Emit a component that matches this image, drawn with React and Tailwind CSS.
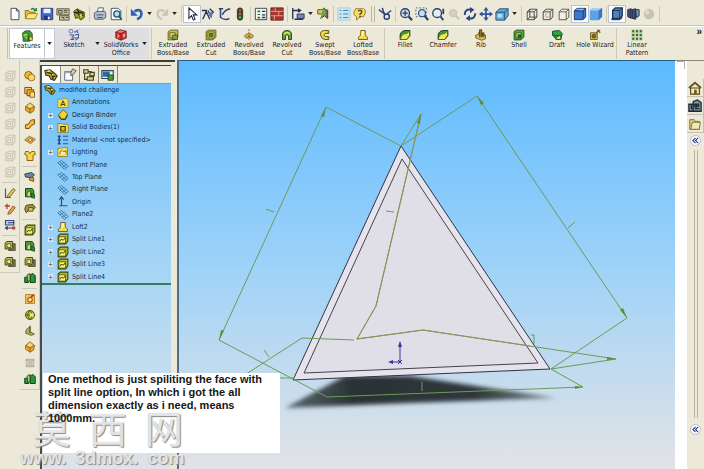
import { useState } from "react";

// small drawings, all on a 16 x 16 grid
const icons = {
    newDoc: <><path d="M3.5 1.5h6l3 3v10h-9z" fill="#fff" stroke="#333c50" /><path d="M9.500 1.500v3h3" fill="none" stroke="#333c50" /></>,
    open: <><path d="M1.500 13V4h4l1 2h6v7z" fill="#e8c43c" stroke="#8a6c10" /><path d="M1.500 13.500l3-6h11l-3 6z" fill="#ffe680" stroke="#a08018" /><path d="M8 3q3-3 5 1m-2 0h3V1" stroke="#1f7a36" fill="none" strokeWidth="1.500" /></>,
    save: <><path d="M1.500 1.500h13v13h-13z" fill="#3f6bd0" stroke="#1c2f78" /><path d="M4 2h8v5H4z" fill="#eef2ff" /><path d="M4.500 10h7v4.500h-7z" fill="#26367c" /><path d="M9 11h2v3H9z" fill="#fff" /></>,
    drawing: <><path d="M1 2h14v7H1zM4 10h11v5H4z" fill="#c9c2a8" stroke="#55503c" /><path d="M3 4h4v3H3zm6 0h4M9 6h4M6 12h3v2M11 12h3" stroke="#4a4632" fill="none" /></>,
    part: <><path d="M2 5l4-3 3 2 5 2v6l-4 3-3-3-3 1z" fill="#94a62c" stroke="#34350b" /><path d="M3 6l4 1 2 4 4-2M6 3l2 3 5 1" stroke="#1f2205" strokeWidth="1.500" fill="none" /><circle cx="10" cy="10" r="1.500" fill="#ece05c" /></>,
    print: <><path d="M5 6l1-5h6l-1 5" fill="#fff" stroke="#4a5774" /><path d="M1.500 7l3-2h9l1 2v5l-3 2h-9l-1-2z" fill="#b6c0d4" stroke="#44506c" /><path d="M4 9h8M5 12h6" stroke="#3c4663" /></>,
    preview: <><path d="M2.500 1.500h8l3 3v10h-11z" fill="#fff" stroke="#3a4663" /><circle cx="9" cy="8" r="3.500" fill="#b5e0ec" stroke="#24536e" strokeWidth="1.500" /><path d="M11.500 10.500l3 4" stroke="#24536e" strokeWidth="2" /></>,
    undo: <><path d="M5 5q8-4 8 3 0 4-5 6" fill="none" stroke="#2e62b4" strokeWidth="3" /><path d="M1 2v8h8z" fill="#2e62b4" /></>,
    redo: <><path d="M11 5Q3 1 3 8q0 4 5 6" fill="none" stroke="#c9c5b2" strokeWidth="2.500" /><path d="M15 2v8H7z" fill="#c9c5b2" /></>,
    select: <path d="M4.500 1v12l3-3 2 5 2-1-2-5h4z" fill="#fff" stroke="#1d2436" strokeWidth="1.200" />,
    grid: <><path d="M2 14l4-9 4 9M1 4h6M10 2l4 4-3 3M8 4l4 8" stroke="#24345c" strokeWidth="1.500" fill="none" /><path d="M9 6h4v4H9z" fill="#5f77b5" /></>,
    sketchLine: <path d="M2 2h5M4 2v10q6 4 10 1M6 9Q9 3 15 2" stroke="#34436c" strokeWidth="1.700" fill="none" />,
    light: <><rect x="5" y="1" width="6" height="14" rx="3" fill="#3a4234" stroke="#22281c" /><circle cx="8" cy="4" r="1.700" fill="#d8362e" /><circle cx="8" cy="8" r="1.600" fill="#8a7a30" /><circle cx="8" cy="12" r="1.700" fill="#3fb44a" /></>,
    options: <><path d="M1.500 1.500h13v13h-13z" fill="#f5f5ee" stroke="#2c3844" /><path d="M4 4h3v2H4zm0 4h3v1H4zm0 3h3v2H4z" fill="#297040" /><path d="M9 5h4M9 9h4M9 12h4" stroke="#2b3954" strokeWidth="1.500" /></>,
    table: <><path d="M1 1h14v14H1z" fill="#a8382f" stroke="#6a1d18" /><path d="M1 5h14M1 10h14M6 1v4M10 5v5M5 10v5" stroke="#e0a890" /></>,
    dimension: <><path d="M2 1v13M2 4h8M8 2l3 2-3 2M4 14h10" stroke="#26315a" strokeWidth="1.500" fill="none" /><path d="M7 8h8v5H7z" fill="#7788bb" stroke="#26315a" /></>,
    macro: <><path d="M2 3h8v5H2z" fill="#e6c94b" stroke="#5c4c10" /><path d="M8 1l5 3v9l-3-3-5 3" fill="#6ba354" stroke="#27401b" /><path d="M13 3v10" stroke="#96352e" strokeWidth="2" /></>,
    list: <><path d="M1 1h14v14H1z" fill="#c7e5f4" stroke="#a9cbe0" /><path d="M3 4h2m2 0h6M3 8h2m2 0h6M3 12h2m2 0h6" stroke="#4f8cb4" strokeWidth="1.300" /></>,
    help: <><path d="M3 2h9q3 1 2 5l-2 4H8l-4 4v-4q-4-2-3-5z" fill="#f5df62" stroke="#8b7423" /><path d="M6 5q2-3 4 0 0 2-2 3v1M8 10v2" stroke="#443d1e" strokeWidth="1.500" fill="none" /></>,
    viewSel: <><path d="M1 3l9 7M5 1l2 7M10 8l5-4M8 12l-1-6" stroke="#2f4378" strokeWidth="1.700" /><circle cx="10" cy="11" r="3" fill="#dae4f4" stroke="#243768" strokeWidth="1.500" /></>,
    zoomFit: <><circle cx="7" cy="7" r="5" fill="#cfdcee" stroke="#2b3d68" strokeWidth="1.500" /><path d="M11 11l4 4" stroke="#2b3d68" strokeWidth="2.500" /><path d="M4 7h6M7 4v6" stroke="#243862" strokeWidth="1.500" /></>,
    zoomArea: <><path d="M1 1h12v10H1z" stroke="#485684" strokeDasharray="2 2" fill="none" /><circle cx="8" cy="7" r="4" fill="#cfdcee" stroke="#2b5a8b" strokeWidth="1.500" /><path d="M11 10l4 5" stroke="#2b3d68" strokeWidth="2.500" /></>,
    zoomIn: <><circle cx="7" cy="7" r="5" fill="#e4ecf7" stroke="#2b3d68" strokeWidth="1.500" /><path d="M11 11l3 4M14 2v6" stroke="#2b3d68" strokeWidth="2" /></>,
    zoomOff: <><circle cx="7" cy="7" r="4" fill="#d5d1c0" stroke="#c9c5b4" strokeWidth="1.500" /><path d="M10 10l4 4" stroke="#c9c5b4" strokeWidth="2.500" /></>,
    rotate: <><path d="M2 9q0-7 7-6M14 7q0 7-7 6" fill="none" stroke="#2c4586" strokeWidth="2.200" /><path d="M8 0l5 3-5 4zM8 16l-5-3 5-4z" fill="#2c4586" /></>,
    pan: <><path d="M8 2v12M2 8h12" stroke="#31549c" strokeWidth="2" /><path d="M8 0l3 4H5zM8 16l3-4H5zM0 8l4-3v6zM16 8l-4-3v6z" fill="#31549c" /></>,
    stdViews: <><path d="M1 6l4-4h10v8l-4 5H1z" fill="#5fa9d6" stroke="#1f4f78" /><path d="M1 6h10v9M11 6l4-4" fill="none" stroke="#1f4f78" /><path d="M3 8h5v4H3z" fill="#b9e0f4" /></>,
    wire: <path d="M2.500 5.500h8v9h-8zM5.500 2.500h8v9h-8zM2.500 5.500l3-3M10.500 5.500l3-3M2.500 14.500l3-3M10.500 14.500l3-3" fill="none" stroke="#3c3f42" />,
    hidden: <><path d="M2.500 5.500h8v9h-8zM2.500 5.500l3-3h8v9l-3 3M10.500 5.500l3-3" fill="none" stroke="#3c3f42" /><path d="M5.500 3v8.500H13" stroke="#aaa898" fill="none" /></>,
    noHidden: <path d="M2.500 5.500h8v9h-8zM2.500 5.500l3-3h8v9l-3 3M10.500 5.500l3-3" fill="#f3f1e6" stroke="#4c4e50" />,
    shadedEdge: <><path d="M1.500 4.500l3-3h10v10l-3 3h-10z" fill="#3d78cd" stroke="#17305f" /><path d="M2 4.500h9.500V14M11.500 4.500l3-3" fill="none" stroke="#17305f" /><path d="M3 3l2-1h8l-2 2z" fill="#8dbcf2" /></>,
    shaded: <><path d="M1 4l3-3h11v10l-4 4H1z" fill="#5ba2e8" /><path d="M1 4l3-3h11l-4 3z" fill="#a4d0f7" /><path d="M11 4l4-3v10l-4 4z" fill="#3874bf" /></>,
    shadow: <><path d="M3 4l3-3h8v9l-3 3H3z" fill="#4d83c2" stroke="#1d2f4c" strokeWidth="1.500" /><path d="M3 4h8v8M11 4l3-3" fill="none" stroke="#1d2f4c" /><path d="M1 13h10l3-3v3l-3 2H2z" fill="#344154" /></>,
    section: <><path d="M2 3l4-1v11l-4-2zM7 3l4-1v12l-4-1z" fill="#3c4b73" stroke="#1a243c" /><path d="M11 3h4v7l-3 2z" fill="#8296bc" stroke="#1a243c" /></>,
    ball: <><circle cx="8" cy="8" r="6" fill="#c5c2b4" /><circle cx="6" cy="6" r="2.500" fill="#dedbcd" /></>,
    features: <><path d="M2 4l4-3h6l3 4v7l-3 3H3z" fill="#379d3d" stroke="#174a1a" /><path d="M2 6q5-4 8 0v8M5 8h4v6" fill="#b8da65" stroke="#174a1a" /><path d="M11 9h4v5h-4z" fill="#e1dc48" stroke="#55571a" /></>,
    sketch: <><circle cx="4" cy="3" r="2.500" fill="none" stroke="#5059a4" /><path d="M8 4h3l3-3M2 8h6l-3 4h9M9 8l5-1v5l-4 3M3 14h5M11 2l3 4" fill="none" stroke="#3f4893" strokeWidth="1.300" /></>,
    office: <><path d="M1 4l6-3 8 2v9l-7 3-7-3z" fill="#cf312d" stroke="#751612" /><path d="M1 4l7 2 7-3M8 6v9" stroke="#7c1713" fill="none" /><path d="M3 8q3 0 2 2t-2 1M11 7l1 4 1-5" stroke="#f7c8c4" strokeWidth="1.200" fill="none" /><path d="M2 4l5-2 6 1-5 2z" fill="#ef8580" /></>,
    extBoss: <><path d="M1.500 3.500l3-2h10v9l-4 4h-9z" fill="#c9c548" stroke="#454312" /><path d="M4 5h7v7H4z" fill="#f0ec86" stroke="#454312" /><path d="M7 8h7v6H7z" fill="#7ca637" stroke="#29410f" /></>,
    extCut: <><path d="M1.500 3.500l3-2h10v9l-4 4h-9z" fill="#b4bd35" stroke="#454312" /><path d="M4 4h8v8H4z" fill="#ece674" stroke="#454312" /><path d="M6 6h4v4H6z" fill="#5c8126" stroke="#29410f" /></>,
    revBoss: <><path d="M8 0v16" stroke="#6d5d28" strokeDasharray="3 1" /><path d="M2 9q6-6 12 0l-2 3H9V9H7v3H4z" fill="#dcb945" stroke="#6c4f14" /></>,
    revCut: <><path d="M2 14V8q0-6 6-6t6 6v6h-4V9q-2-3-4 0v5z" fill="#64a33e" stroke="#244a14" strokeWidth="1.300" /><path d="M4 7q4-5 8 0" stroke="#e7e75b" strokeWidth="2" fill="none" /></>,
    swept: <><path d="M13 2H7Q1 3 2 8t6 6h5v-4H8q-3-2 0-4h5z" fill="#edd94b" stroke="#635512" strokeWidth="1.300" /><path d="M12 3v3M12 10v4" stroke="#8b7a22" /></>,
    loft: <><path d="M5 2h6v4q0 3 3 5v3H2v-3q3-2 3-5z" fill="#f0d94c" stroke="#6f5810" strokeWidth="1.200" /><path d="M6 3h3v4l-3 4z" fill="#fff6ac" /></>,
    fillet: <><path d="M1.500 14V8q1-6 8-6h5v7l-4 5z" fill="#3c9741" stroke="#153f19" strokeWidth="1.300" /><path d="M2 13Q3 6 10 6l4-3v6l-4 5H2z" fill="#ede553" stroke="#5a5612" /></>,
    rib: <><path d="M1 8l4-1V4h3v3l6 1v5l-5 2-8-3z" fill="#d6c15a" stroke="#594818" /><path d="M6 11V1h3v10M10 10V5h2v6" fill="#8c7328" stroke="#4e3c12" /></>,
    shell: <><path d="M1.500 3.500l3-2h10v9l-4 4h-9z" fill="#53aa3e" stroke="#1d4b16" strokeWidth="1.200" /><path d="M4 5h7v7H4z" fill="#e8e15a" stroke="#1d4b16" /><path d="M6 7h5v5H6z" fill="#236229" /></>,
    draft: <><path d="M2 3l9-1 4 4-2 8H7L2 8z" fill="#2da34b" stroke="#12461f" strokeWidth="1.200" /><path d="M2 8l9 1 2 5" fill="none" stroke="#12461f" /><path d="M7 11l6-3v6H7z" fill="#e1e15d" stroke="#12461f" /></>,
    hole: <><path d="M2 5h9v9H2z" fill="#d2bd4a" stroke="#5b4a14" /><circle cx="6.500" cy="9.500" r="2.500" fill="#83702a" stroke="#44380f" /><path d="M9 7l5-6M11 1l4 4M10 4l5-2" stroke="#75621e" strokeWidth="1.500" /></>,
    pattern: <path d="M1 1h4v4H1zM6 1h4v4H6zM11 1h4v4h-4zM1 6h4v4H1zM6 6h4v4H6zM11 6h4v4h-4zM1 11h4v4H1zM6 11h4v4H6zM11 11h4v4h-4z" fill="#2f6f28" stroke="#e5e5c7" strokeWidth=".8" />,
    ghost: <path d="M2.500 4.500h9v10h-9zM2.500 4.500l3-3h9v10l-3 3M11.500 4.500l3-3M5 7h4v5H5z" fill="none" stroke="#b9b5a4" />,
    pencil: <><path d="M2 2v12h7" fill="none" stroke="#4a5098" strokeWidth="1.500" /><path d="M5 11l7-9 3 2-7 9-4 1z" fill="#e4c75c" stroke="#6b4b1e" /></>,
    redPencil: <><path d="M4 1v7M1 4h7" stroke="#c03a32" strokeWidth="1.700" /><path d="M6 12l6-8 3 2-6 8-4 1z" fill="#e2a94b" stroke="#7a3c1c" /></>,
    dims: <><path d="M2 2h11v6H2z" fill="#c9d6ea" stroke="#34487e" strokeWidth="1.500" /><path d="M5 5h9M3 12h10M5 10l-3 2 3 2" stroke="#283a77" strokeWidth="1.500" fill="none" /><path d="M11 10h4v4h-4z" fill="#b64238" /></>,
    goldBall: <><circle cx="6" cy="7" r="5" fill="#f0ba35" stroke="#86560d" strokeWidth="1.200" /><circle cx="10" cy="10" r="4.500" fill="#f8d969" stroke="#86560d" /></>,
    goldBlock: <><path d="M1 2h9v8H1z" fill="#f5d258" stroke="#77460b" strokeWidth="1.200" /><path d="M4 5h9v8H4z" fill="#f3aa30" stroke="#77460b" strokeWidth="1.200" /><path d="M8 8h6v7H8z" fill="#ffe07d" stroke="#77460b" /></>,
    gem: <><path d="M8 1l6 5-1 6-5 3-6-4V6z" fill="#e4a52e" stroke="#875b18" /><path d="M2 6l6 3 6-3M8 9v6" stroke="#7f5414" fill="none" /><path d="M4 6l4-4 4 4-4 2z" fill="#f9dd7d" /></>,
    bend: <path d="M2 9l4-1 3-5 5-1v6l-4 2-3 4H2z" fill="#f2b83b" stroke="#7d500d" strokeWidth="1.300" />,
    diamond: <><path d="M1 8l6-5 8 4-6 6z" fill="#e9b64a" stroke="#815417" /><path d="M5 8l3-2 4 2-4 2z" fill="#fff1a5" stroke="#815417" /></>,
    shirt: <path d="M2 2h4l2 3 2-3h4l1 4-3 1v7H4V7L1 6z" fill="#f6d748" stroke="#8c620f" strokeWidth="1.300" />,
    gray: <><path d="M3 3h10v10H3z" fill="#d2cfc0" stroke="#aaa797" /><path d="M2 4h12M2 12h12M5 5l6 6M11 5l-6 6" stroke="#aaa797" /></>,
    surface: <><path d="M1 4l9-2 4 3-4 4-8-1z" fill="#6689a5" stroke="#223c4f" strokeWidth="1.200" /><path d="M8 8l5 1v5l-6-2z" fill="#d49c37" stroke="#61400e" /></>,
    green: <><path d="M2 2h9l2 3v8H2z" fill="#4a9f3f" stroke="#174319" strokeWidth="1.300" /><path d="M4 9q1-4 5-4v8H4z" fill="#cce06d" stroke="#174319" /><path d="M9 8l5 2v5l-4-1z" fill="#2b883a" stroke="#174319" /></>,
    olive: <><path d="M1 8l2-5 9-1 3 4-3 3-6 1-3 3z" fill="#a59a43" stroke="#434116" strokeWidth="1.300" /><path d="M6 6h6v5H6z" fill="#d5c45e" stroke="#434116" /></>,
    split: <><path d="M1.500 4l3-2.500h10v9l-3 4h-10z" fill="#b6c22c" stroke="#3d4409" strokeWidth="1.400" /><path d="M2.500 5h9v8.500h-9z" fill="#f5f07b" stroke="#3d4409" /><path d="M4 11q1-4 3-2t4-3" fill="none" stroke="#3d4409" strokeWidth="1.300" /></>,
    offset: <><path d="M1.500 4l2-2h8v8l-2 2h-8z" fill="#bdb94e" stroke="#4b4a18" strokeWidth="1.300" /><path d="M4 5h5v5H4z" fill="#eeeba0" stroke="#4b4a18" /><path d="M12 5h3v9H6v-2h6z" fill="#7b7a54" stroke="#45442a" /></>,
    mold: <><path d="M1 7h5v7H1zM8 4l4-2 3 3v9H8z" fill="#2b9341" stroke="#153e1c" strokeWidth="1.300" /><path d="M4 4l4-2v9l-3 2z" fill="#a9d058" stroke="#153e1c" /></>,
    orange: <><path d="M2 2h12v12H2z" fill="#f5c04d" stroke="#a9731a" /><circle cx="8" cy="9" r="3" fill="#ffecae" stroke="#ac4b19" strokeWidth="1.500" /><path d="M9 5l4-2" stroke="#a43c17" strokeWidth="2" /></>,
    globe: <><circle cx="8" cy="8" r="6" fill="#adc034" stroke="#475219" strokeWidth="1.300" /><path d="M2 8h12M8 2q-6 6 0 12M8 2q6 6 0 12" stroke="#475219" fill="none" /><path d="M8 6h5v4H8z" fill="#efe870" /></>,
    axis: <><path d="M3 6l5-4v7l6 3-4 2-8-3z" fill="#b1ac65" stroke="#55522a" /><path d="M8 1v10" stroke="#55522a" strokeWidth="1.500" /></>,
    tree: <><path d="M1 3l6-1 5 4 3 3-3 5-4-1-2-4-4-1z" fill="#b9a93a" stroke="#373c0b" strokeWidth="1.300" /><path d="M3 5l5 1 2 4 3-1M8 6l3 1M10 10v3" stroke="#2c2f08" fill="none" strokeWidth="1.500" /><path d="M4 4l3-1M9 8l2-1" stroke="#fbf59a" strokeWidth="1.500" /></>,
    property: <><path d="M2 4h9v10H2z" fill="#fff" stroke="#505b72" /><path d="M2 4h9v2H2z" fill="#9eaac3" /><path d="M9 5l2-4 4 2-3 4-3 2z" fill="#ddd0a4" stroke="#4f4a3a" /></>,
    config: <><path d="M2 2h5v4H2zM9 5h5v4H9zM6 10h7v4H6z" fill="#d8cfa0" stroke="#47411a" strokeWidth="1.300" /><path d="M3 6v7h3M7 4h4" stroke="#47411a" fill="none" strokeWidth="1.300" /></>,
    display: <><path d="M1 3h13v9H1z" fill="#e8edf5" stroke="#354765" strokeWidth="1.300" /><path d="M2 10h8V4H2z" fill="#2c6c9d" /><path d="M8 8h6v6H8z" fill="#4b9a3e" stroke="#1f4519" /></>,
    annot: <><path d="M1 3h6l1-1h5l2 2v10H1z" fill="#f3dd54" stroke="#a28a24" /><path d="M5 12l3-7 3 7M6 10h4" stroke="#3c3c1e" strokeWidth="1.300" fill="none" /></>,
    binder: <><path d="M8 1l6 5-3 7H6L2 8z" fill="#f3d33b" stroke="#796214" strokeWidth="1.200" /><path d="M2 9l4 5h5l3-6" fill="none" stroke="#5a4a12" strokeWidth="1.500" /></>,
    bodies: <><path d="M1 2h6l1 1h7v11H1z" fill="#f4df55" stroke="#8c7620" /><path d="M5 6h6v6H5z" fill="#d7bc35" stroke="#3e3610" strokeWidth="1.500" /></>,
    material: <><path d="M3 2v12M1 3h4M1 8h4M1 13h4" stroke="#24478c" strokeWidth="2" /><path d="M8 3h7M8 8h7M8 13h7" stroke="#2858a0" strokeWidth="1.600" /></>,
    lighting: <><path d="M1 3h6l1-1h6v12H1z" fill="#f4df55" stroke="#8c7620" /><path d="M4 11V8l3-2 2 2 3-2v5" stroke="#96631e" fill="#fffbc9" strokeWidth="1.300" /></>,
    plane: <path d="M1 5l5-3 9 8-5 4zM4 4l8 8M4 8l6-4M7 11l6-4" fill="none" stroke="#35688f" />,
    origin: <path d="M6 2v11h8M3 5l3-4 3 4M3 13h3" fill="none" stroke="#355071" strokeWidth="1.600" />,
    home: <><path d="M3 8h10v7H3z" fill="#f7edb1" stroke="#53421a" strokeWidth="1.300" /><path d="M1 8l7-6 7 6" fill="none" stroke="#69511f" strokeWidth="2" /><path d="M7 10h3v5H7z" fill="#6d511d" /></>,
    library: <><path d="M1 6h5v8H1zM6 3l5-2 4 3v10H6z" fill="#8295a0" stroke="#1c2b38" strokeWidth="1.500" /><path d="M3 8h1v4M8 6h2v3H8zM12 5v4M8 11h5" stroke="#14222e" strokeWidth="1.600" fill="none" /></>,
    folder: <><path d="M2 3h5l1 2h5v9H2z" fill="#e0cc77" stroke="#7c6930" /><path d="M5 6h9l-1 8H3z" fill="#f5e9b2" stroke="#7c6930" /></>,
};

function Icon({ name, className = "size-[14px]" }) {
    return (
        <svg viewBox="0 0 16 16" aria-hidden="true" className={`${className} shrink-0`}>{icons[name]}</svg>
    );
}

function Sep({ className = "w-[5px]" }) {
    return <div className={`${className} flex shrink-0 justify-center`}><span className="h-full w-px bg-[#cdc9b8]" /></div>;
}

function Caret() {
    return (
        <button aria-label="More options" className="flex w-[9px] shrink-0 items-center justify-center">
            <svg viewBox="0 0 6 4" className="h-[3px] w-[5px]"><path d="M0 0h6L3 4z" fill="#222" /></svg>
        </button>
    );
}

const topBar = [
    "newDoc", "open", "save", "drawing", "part", "|", "print", "preview", "|", "undo", "v", "redo", "v", "|",
    "select", "grid", "sketchLine", "light", "|", "options", "table", "|", "dimension", "v", "macro", "|", "list", "help", "||",
    "viewSel", "|", "zoomFit", "zoomArea", "zoomIn", "zoomOff", "rotate", "pan", "stdViews", "v", "|",
    "wire", "hidden", "noHidden", "shadedEdge", "shaded", "|", "shadow", "section", "ball", "|",
];
const pressed = ["select", "shadedEdge", "shadow"];

const ribbon = [
    ["extBoss", "Extruded Boss/Base"], ["extCut", "Extruded Cut"], ["revBoss", "Revolved Boss/Base"],
    ["revCut", "Revolved Cut"], ["swept", "Swept Boss/Base"], ["loft", "Lofted Boss/Base"], ["|"],
    ["fillet", "Fillet"], ["fillet", "Chamfer"], ["rib", "Rib"], ["shell", "Shell"], ["draft", "Draft"],
    ["hole", "Hole Wizard"], ["|"], ["pattern", "Linear Pattern"],
];

const leftTools = ["ghost", "ghost", "ghost", "ghost", "ghost", "ghost", "ghost", "|", "pencil", "redPencil", "dims", "|", "offset", "offset"];
const featureTools = [
    "goldBall", "goldBlock", "gem", "bend", "diamond", "shirt", "|", "surface", "green", "olive", "|",
    "split", "green", "offset", "mold", "|", "orange", "globe", "axis", "gem", "gray", "mold",
];

const treeItems = [
    ["annot", "Annotations"], ["binder", "Design Binder", true], ["bodies", "Solid Bodies(1)", true],
    ["material", "Material <not specified>"], ["lighting", "Lighting", true], ["plane", "Front Plane"],
    ["plane", "Top Plane"], ["plane", "Right Plane"], ["origin", "Origin"], ["plane", "Plane2"],
    ["loft", "Loft2", true], ["split", "Split Line1", true], ["split", "Split Line2", true],
    ["split", "Split Line3", true], ["split", "Split Line4", true],
];

function TopToolbar() {
    return (
        <div className="flex h-[26px] shrink-0 items-center border-b border-[#c9c5b4] pl-[7px] pt-0.5">
            {topBar.map((name, i) => {
                if (name === "|") return <Sep key={i} className="h-4 w-[5px]" />;
                if (name === "||") return <div key={i} className="flex h-4 w-[9px] justify-center gap-0.5"><i className="w-px bg-[#bbb7a6]" /><i className="w-px bg-[#bbb7a6]" /></div>;
                if (name === "v") return <Caret key={i} />;
                return (
                    <button key={i} aria-label={name} className={`flex size-4 shrink-0 items-center justify-center ${pressed.includes(name) ? "bg-white outline outline-[#b8c2d4]" : ""}`}>
                        <Icon name={name} />
                    </button>
                );
            })}
        </div>
    );
}

function RibbonButton({ icon, label, className = "w-[38px]" }) {
    return (
        <button className={`${className} flex shrink-0 flex-col items-center pt-px`}>
            <Icon name={icon} className="size-3" />
            <span className="w-min text-center">{label === "Hole Wizard" ? <span className="whitespace-nowrap">{label}</span> : label}</span>
        </button>
    );
}

function Ribbon() {
    return (
        <div className="flex h-[34px] shrink-0 items-stretch border-t border-white py-px pl-[7px] font-['DejaVu_Sans_Condensed','DejaVu_Sans',sans-serif] text-[7px] leading-[8px] text-[#222]">
            <div className="w-0.5 border-l border-[#c4c0b0]" />
            <div className="flex border border-[#c4c8d0] bg-white">
                <RibbonButton icon="features" label="Features" className="w-[34px]" />
                <span className="flex border-l border-[#c4c8d0]"><Caret /></span>
            </div>
            <div className="flex bg-[#dfdfe2]">
                <RibbonButton icon="sketch" label="Sketch" />
                <Caret />
                <RibbonButton icon="office" label="SolidWorks Office" />
                <Caret />
            </div>
            <Sep className="w-[5px]" />
            {ribbon.map(([icon, label], i) => (
                icon === "|" ? <Sep key={i} className="w-1" /> : <RibbonButton key={i} icon={icon} label={label} />
            ))}
            <button aria-label="More tools" className="ml-auto self-start pr-0.5 font-['Liberation_Sans'] text-[10px] font-bold leading-[8px]">»</button>
        </div>
    );
}

function ToolColumn({ tools, label }) {
    return (
        <div role="toolbar" aria-label={label} className="w-5 shrink-0 self-start border-b border-r border-[#cdc9b8] pb-0.5 pt-2">
            {tools.map((name, i) => (
                name === "|" ? <div key={i} className="mx-0.5 my-0.5 h-px bg-[#cdc9b8]" /> :
                <button key={i} aria-label={name} className="flex h-4 w-full items-center justify-center">
                    <Icon name={name} className="size-3" />
                </button>
            ))}
        </div>
    );
}

function FeatureTree() {
    const [tab, setTab] = useState("tree");

    return (
        <aside className="flex w-[135px] shrink-0 flex-col border-t-2 border-[#3e3d38] bg-[#ece9d8] pr-1 pt-[3px]">
            <div className="flex flex-1 flex-col border-l-2 border-t border-[#4a4a48]">
                <div role="tablist" className="flex h-[18px] items-end border-b border-[#9a988c]">
                    {["tree", "property", "config", "display"].map(name => (
                        <button key={name} role="tab" aria-label={name} aria-selected={tab === name} onClick={() => setTab(name)}
                            className={`flex h-[17px] w-[19px] items-center justify-center border-r border-[#8c8a80] ${tab === name ? "bg-white" : ""}`}>
                            <Icon name={name} />
                        </button>
                    ))}
                </div>
                <div className="flex-1 bg-linear-to-b from-[#6cc0fb] via-[#a8d6f5] to-[#dfe3e8] font-['DejaVu_Sans_Condensed','DejaVu_Sans',sans-serif] text-[7px] text-[#152c48]">
                    <ul role="tree" className="grid h-[201px] auto-rows-fr border-b-2 border-[#3b7a62]">
                        <li role="treeitem" className="flex items-center gap-[3px] pl-0.5"><Icon name="tree" className="size-3" />modified challenge</li>
                        {treeItems.map(([icon, label, hasChildren]) => (
                            <li key={label} role="treeitem" className="flex items-center whitespace-nowrap pl-1.5">
                                <span className="flex w-[9px]">
                                    {hasChildren && <button aria-label={`Expand ${label}`} className="flex size-[5px] items-center justify-center bg-[#d3e9f6] text-[6px] leading-none">+</button>}
                                </span>
                                <Icon name={icon} className="mr-[3px] size-3" />
                                {label}
                            </li>
                        ))}
                    </ul>
                </div>
            </div>
        </aside>
    );
}

function Viewport() {
    return (
        <main className="min-w-0 flex-1 border-t border-[#285a80] bg-linear-to-b from-[#5bbaff] via-[#9dd2f8] to-[#e2e3e6]">
            <svg viewBox="179 61 496 408" className="size-full" role="img" aria-label="Triangular part with dimensions">
                <defs>
                    <linearGradient id="shade" x1="0" x2="1">
                        <stop offset="0" stopColor="#5b6b74" />
                        <stop offset=".25" stopColor="#2b3236" />
                        <stop offset=".7" stopColor="#2f373b" />
                        <stop offset="1" stopColor="#7c8b94" />
                    </linearGradient>
                    <filter id="soft" x="-10%" y="-30%" width="120%" height="160%"><feGaussianBlur stdDeviation="2" /></filter>
                </defs>
                <path d="M285 408L345 376H410L556 398L410 403Z" fill="url(#shade)" filter="url(#soft)" />
                <path d="M401 146L550 369L293 380Z" fill="#e5e3ee" stroke="#33333e" />
                <path d="M402 159L538 363L304 373Z" fill="#e0dfe8" stroke="#4a4048" />
                <g fill="none" stroke="#6c9a56" strokeWidth="1">
                    <path d="M401 146L326 107L219 340L327 397L583 387L551 369" />
                    <path d="M401 146L477 96L627 318L551 369L616 359L423 330L357 339L376 306L421 114L401 146" />
                    <path d="M354 340L302 338L240 378H293" />
                    <path d="M266 209l8 3M386 211l8 1M568 228l7-6M264 350l5 7M422 382v9M531 335h3v9" />
                </g>
                <path d="M421 114L376 306L357 339L423 330L530 346" fill="none" stroke="#92905e" />
                <path d="M326 107l-5 9 3 1zM219 340l2-10 3 1zM477 96l4 9 3-2zM627 318l-7-8 3-2zM421 114l-4 9 3 1zM616 359l-9-2v3zM583 387l-8-1v3z" fill="#5d8c3c" />
                <g stroke="#34349a" fill="#34349a">
                    <path d="M400 363V343M400 362H390M398 360l4 4M402 360l-4 4" />
                    <path d="M400 341l2 6h-4zM388 362l5-2v4z" stroke="none" />
                </g>
            </svg>
        </main>
    );
}

function PaneToggle() {
    return (
        <button aria-label="Toggle pane" className="mt-0.5 flex size-[11px] shrink-0 items-center justify-center rounded-full border border-[#b4b8d0] bg-white">
            <svg viewBox="0 0 8 8" className="size-[7px]"><path d="M4 1L1 4l3 3M7 1L4 4l3 3" fill="none" stroke="#343f8b" strokeWidth="1.300" /></svg>
        </button>
    );
}

function TaskPane() {
    return (
        <aside className="flex w-[29px] shrink-0 border-t border-[#8b8878]">
            <div className="w-3 bg-white"><div className="ml-0.5 h-2 w-2 border-r border-t border-[#b4b1a6]" /></div>
            <div className="flex flex-1 flex-col items-center pt-[18px]">
                {["home", "library", "folder"].map(name => (
                    <button key={name} aria-label={name} className="flex h-[18px] w-full items-center border-b border-r border-[#c5c1b2] pl-px">
                        <Icon name={name} />
                    </button>
                ))}
                <PaneToggle />
                <div className="my-1 flex w-1 flex-1 justify-between"><i className="w-px bg-[#b8b5a6]" /><i className="w-px bg-[#b8b5a6]" /></div>
                <PaneToggle />
                <div className="h-[34px]" />
            </div>
        </aside>
    );
}

export default function App() {
    return (
        <div className="relative flex h-screen flex-col overflow-hidden bg-[#ece9d8]">
            <TopToolbar />
            <Ribbon />
            <div className="flex min-h-0 flex-1">
                <ToolColumn tools={leftTools} label="Views" />
                <ToolColumn tools={featureTools} label="Features" />
                <FeatureTree />
                <div className="ml-0.5 w-0.5 bg-[#4f6f88]" />
                <Viewport />
                <TaskPane />
            </div>

            {/* site mark goes between the note's paper and its text, so the last line stays readable */}
            <div className="absolute bottom-4 left-[43px] h-20 w-[237px] bg-white" />
            <div className="absolute bottom-0 left-5 text-white/75 [text-shadow:1px_1px_1px_#888,0_0_1px_#aaa]">
                <div className="flex gap-[18px] pl-[13px] font-['Noto_Sans_CJK_SC',sans-serif] text-[38px] leading-[40px]"><span>莫</span><span>西</span><span>网</span></div>
                <div className="flex gap-[9px] font-['Liberation_Sans',sans-serif] text-lg font-bold leading-[22px]"><span>www.</span><span>3dmox.</span><span>com</span></div>
            </div>
            <p className="absolute bottom-4 left-[43px] h-20 w-[237px] whitespace-nowrap pl-[5px] font-['Liberation_Sans',Arial,sans-serif] text-[11px] font-bold leading-[13px] text-[#161616]">
                One method is just spiliting the face with<br />split line option, In which i got the all<br />dimension exactly as i need, means<br />1000mm.
            </p>
        </div>
    );
}
